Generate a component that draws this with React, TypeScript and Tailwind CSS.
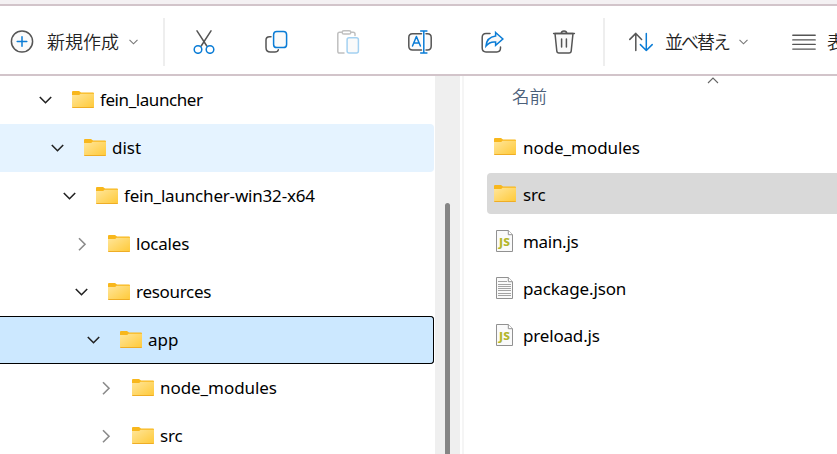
import type { ReactNode } from "react";

const LATIN = "font-['Noto_Sans','Noto_Sans_CJK_JP',sans-serif]";
const DARK = "#555555";
const BLUE = "#0a7cd6";

function Icon({ children, className = "" }: { children: ReactNode; className?: string }) {
  return (
    <svg width="24" height="24" viewBox="0 0 24 24" fill="none" strokeWidth="1.5" strokeLinecap="round" strokeLinejoin="round" className={`shrink-0 ${className}`}>
      {children}
    </svg>
  );
}

function SmallChevron() {
  return (
    <svg width="9" height="6" viewBox="0 0 9 6" fill="none" stroke="#777" strokeWidth="1.1" className="shrink-0">
      <path d="M.5.8 4.5 4.8 8.5.8" />
    </svg>
  );
}

function Folder() {
  return (
    <svg width="22" height="18" viewBox="0 0 22 18" className="shrink-0">
      <defs>
        <linearGradient id="folder" x1="0" y1="0" x2="1" y2="1">
          <stop offset="0" stopColor="#ffe69b" />
          <stop offset="1" stopColor="#ffc937" />
        </linearGradient>
      </defs>
      <path d="M0 1Q0 0 1 0H7L9 1.5H21Q22 1.5 22 2.5V6H0Z" fill="#f8b71c" />
      <path d="M0 4H7.2L8.5 2.7H22V16Q22 17 21 17H1Q0 17 0 16Z" fill="url(#folder)" />
      <path d="M.3 16.5H21.7" stroke="#efad25" />
    </svg>
  );
}

function FileIcon({ kind }: { kind: string }) {
  return (
    <svg width="17" height="22" viewBox="0 0 17 22" fill="none" className="shrink-0">
      <path d="M.5.5H12.3L16.5 4.7V21.5H.5Z" fill="#fafafa" stroke="#919191" />
      <path d="M12.3.5V4.7H16.5" fill="#fff" stroke="#919191" />
      {kind === "js" ? (
        <text x="3.1" y="16" fontSize="10.5" fontWeight="800" textLength="10.8" lengthAdjust="spacingAndGlyphs" fill="#b3b62b" className={LATIN}>JS</text>
      ) : (
        <path d="M2 4.5H11M2 7.5H15M2 9.5H15M2 11.5H15M2 13.5H15M2 16.5H15M2 18.5H15" stroke="#a3a3a3" />
      )}
    </svg>
  );
}

const tree = [
  { name: "fein_launcher", open: true, pad: "pl-[38px]", track: "tracking-[-0.42px]" },
  { name: "dist", open: true, pad: "pl-[50px]", track: "", bg: "bg-[#e5f3ff]" },
  { name: "fein_launcher-win32-x64", open: true, pad: "pl-[62px]", track: "tracking-[-0.19px]" },
  { name: "locales", open: false, pad: "pl-[74px]", track: "tracking-[-0.2px]" },
  { name: "resources", open: true, pad: "pl-[74px]", track: "tracking-[-0.3px]" },
  { name: "app", open: true, pad: "pl-[86px]", track: "", bg: "bg-[#cce8ff] shadow-[inset_0_1px_#000,inset_0_-1px_#000,inset_-1px_0_#000]" },
  { name: "node_modules", open: false, pad: "pl-[98px]", track: "tracking-[-0.06px]" },
  { name: "src", open: false, pad: "pl-[98px]", track: "tracking-[-0.2px]" },
];

const files = [
  { name: "node_modules", kind: "folder", track: "tracking-[-0.06px]" },
  { name: "src", kind: "folder", track: "tracking-[-0.2px]", selected: true },
  { name: "main.js", kind: "js", track: "tracking-[-0.3px]" },
  { name: "package.json", kind: "text", track: "tracking-[-0.12px]" },
  { name: "preload.js", kind: "js", track: "tracking-[-0.18px]" },
];

function Toolbar() {
  return (
    <header className="mt-1 flex h-[72px] shrink-0 items-center overflow-hidden border-y-2 border-[#d2c4ca] bg-white pt-1 pl-[10px] font-['Noto_Sans_CJK_JP',sans-serif] text-[18px] font-[350] text-[#222]">
      <Icon>
        <circle cx="12" cy="11.5" r="10.6" fill="#fafafa" stroke={DARK} />
        <path d="M12 6.7V16.3M7.2 11.5H16.8" stroke={BLUE} />
      </Icon>
      <span className="ml-[13px] w-[72px] shrink-0 whitespace-nowrap pb-0.5 leading-6">新規作成</span>
      <span className="ml-[10px] flex shrink-0"><SmallChevron /></span>
      <div className="ml-[25px] h-12 w-0.5 shrink-0 bg-[#eee]" />
      <Icon className="ml-[27px]">
        <path d="M5 .8 14.8 16M19 .8 9.2 16" stroke={DARK} />
        <circle cx="6" cy="19.5" r="3.8" stroke={BLUE} fill="#fff" />
        <circle cx="18" cy="19.5" r="3.8" stroke={BLUE} fill="#fff" />
      </Icon>
      <Icon className="ml-12">
        <path d="M7 6.7H5.5Q2 6.7 2 10V17.5Q2 22 6.4 22H10.8Q13.8 22 14.3 19.8" stroke={DARK} />
        <rect x="9.6" y="1.6" width="13" height="16" rx="3.2" fill="#fafafa" stroke={BLUE} />
      </Icon>
      <Icon className="ml-12">
        <path d="M6 2.2H3.5Q1.8 2.2 1.8 4V21.3Q1.8 23.1 3.5 23.1H8M15 2.2H17.2Q19 2.2 19 4V5.5" stroke="#c0c0c0" />
        <rect x="6.2" y=".8" width="8.6" height="3.2" rx="1.6" stroke="#c0c0c0" />
        <rect x="11.1" y="7.8" width="11.3" height="15.3" rx="2" fill="#fafafa" stroke="#a4d1f1" />
      </Icon>
      <Icon className="ml-12">
        <path d="M13.5 3.7H4.5Q.8 3.7 .8 7.5V16Q.8 20 4.5 20H13.5M18 3.7H19.5Q23.2 3.7 23.2 7.5V16Q23.2 20 19.5 20H18" fill="#fafafa" stroke={DARK} />
        <path d="M4.5 16 8.4 6.5 12.4 16M5.8 13H11M12.7.9H18.9M15.8.9V23.1M12.7 23.1H18.9" stroke={BLUE} />
      </Icon>
      <Icon className="ml-12">
        <path d="M10 3.5H6Q2.2 3.5 2.2 7.2V18Q2.2 21.9 6 21.9H16.8Q20.5 21.9 20.5 18V17" stroke={DARK} />
        <path d="M15.6 2.5 22.9 9 15.6 15.3V12Q9.9 11.2 6 16Q6.6 7.2 15.6 6Z" fill="#f8f8f8" stroke={BLUE} strokeLinejoin="miter" />
      </Icon>
      <Icon className="ml-12">
        <path d="M3 3.5 4.8 21Q5 23 7 23H17Q19 23 19.2 21L21 3.5Z" fill="#fafafa" stroke={DARK} />
        <path d="M1.6 3.5H22.4M9.2 3.2Q9.4.9 12 .9T14.8 3.2M9.6 9V17M14.4 9V17" stroke={DARK} />
      </Icon>
      <div className="ml-[27px] h-12 w-0.5 shrink-0 bg-[#eee]" />
      <Icon className="ml-6">
        <path d="M6.8 20.5V3.4M.8 9.4 6.8 3.4 12.6 9.4" stroke={DARK} />
        <path d="M17.3 3.4V20.5M11.4 14.6 17.3 20.5 23.2 14.6" stroke={BLUE} />
      </Icon>
      <span className="ml-3 w-[66px] shrink-0 whitespace-nowrap pb-0.5 leading-6 tracking-[-2px]">並べ替え</span>
      <span className="ml-2 flex shrink-0"><SmallChevron /></span>
      <Icon className="ml-[44px]">
        <path d="M.8 5.2H23.2M.8 9.9H23.2M.8 14.4H23.2M.8 19.1H23.2" stroke={DARK} strokeWidth="1.4" />
      </Icon>
      <span className="ml-[11px] shrink-0 pb-0.5 leading-6">表</span>
    </header>
  );
}

export default function App() {
  return (
    <div className="flex h-[454px] w-[837px] flex-col overflow-hidden bg-[#f4f1f3]">
      <Toolbar />
      <main className={`flex min-h-0 flex-1 bg-white text-[17px] text-black ${LATIN}`}>
        <nav className="w-[435px] shrink-0 overflow-hidden pr-px">
          {tree.map((item, index) => (
            <div key={index} className={`flex h-12 items-center rounded-r-sm ${item.pad} ${item.bg ?? ""}`}>
              <svg width="16" height="16" viewBox="0 0 16 16" fill="none" stroke={item.open ? "#222" : "#8b8b8b"} strokeWidth="1.6" className="shrink-0">
                <path d={item.open ? "M1.8 5 7.5 10.7 13.2 5" : "M5 2.3 11 8.3 5 14.3"} />
              </svg>
              <span className="ml-[18px]"><Folder /></span>
              <span className={`ml-1.5 whitespace-nowrap leading-6 ${item.track}`}>{item.name}</span>
            </div>
          ))}
        </nav>
        <div className="w-[25px] shrink-0 bg-[#efefef] pl-[10px] pt-[127px]">
          <div className="h-[251px] w-[5px] rounded-t-full bg-[#858585]" />
        </div>
        <section className="ml-0.5 min-w-0 flex-1 border-l-2 border-[#f5f5f5] pl-[23px]">
          <div className="flex h-[50px] items-start pt-px pl-[25px] text-[#4c607a]">
            <span className="pt-[7px] font-['Noto_Sans_CJK_JP',sans-serif] text-[17.5px] leading-6 font-[350]">名前</span>
            <svg width="12" height="7" viewBox="0 0 12 7" fill="none" stroke="#666" strokeWidth="1.1" className="ml-[160px]">
              <path d="M1 6 6 1 11 6" />
            </svg>
          </div>
          {files.map((file) => (
            <div key={file.name} className="flex h-[47px] items-start">
              <div className={`flex h-[41px] flex-1 items-center rounded-l-sm pl-[7px] ${file.selected ? "bg-[#d9d9d9]" : ""}`}>
                <span className={`w-[22px] shrink-0 ${file.kind === "folder" ? "" : "pl-0.5"}`}>{file.kind === "folder" ? <Folder /> : <FileIcon kind={file.kind} />}</span>
                <span className={`ml-[7px] whitespace-nowrap pt-[3px] leading-6 ${file.track}`}>{file.name}</span>
              </div>
            </div>
          ))}
        </section>
      </main>
    </div>
  );
}
